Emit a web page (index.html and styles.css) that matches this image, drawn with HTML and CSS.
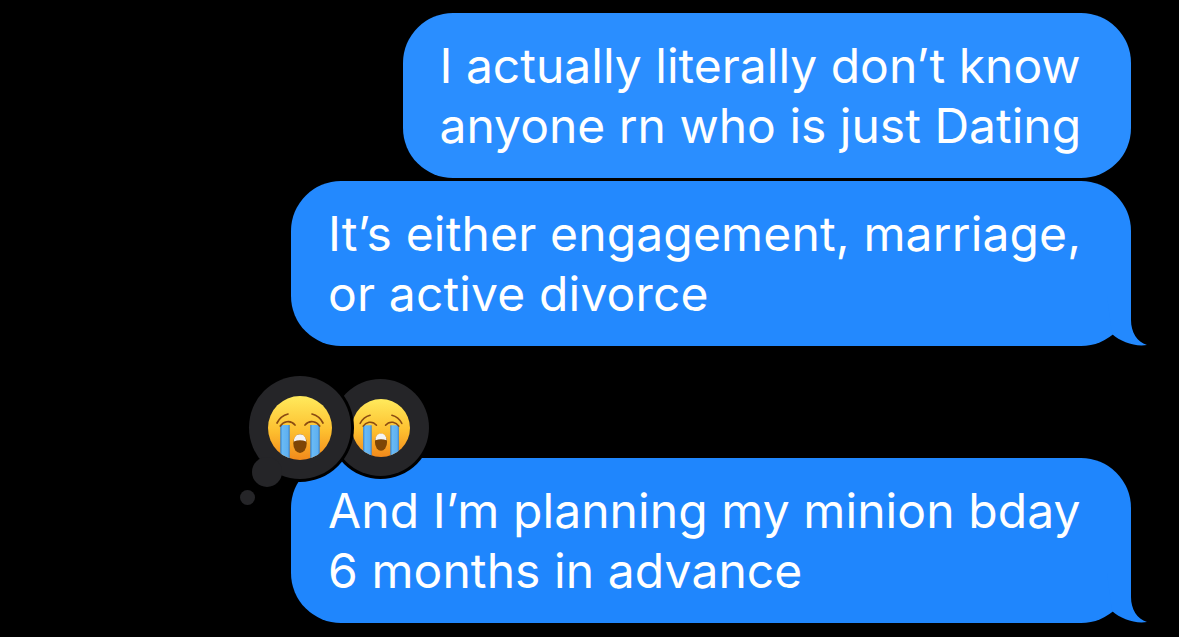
FILE: index.html
```html
<!DOCTYPE html>
<html lang="en">
<head>
<meta charset="utf-8">
<title>Messages</title>
<link rel="stylesheet" href="styles.css">
</head>
<body>
<svg class="defs" width="0" height="0" aria-hidden="true">
  <defs>
    <linearGradient id="face" x1="0" y1="0" x2="0" y2="1">
      <stop offset="0" stop-color="#ffea5c"/>
      <stop offset=".55" stop-color="#fdbf2f"/>
      <stop offset="1" stop-color="#f2891b"/>
    </linearGradient>
    <linearGradient id="tear" x1="0" y1="0" x2="1" y2="0">
      <stop offset="0" stop-color="#2a7fd6"/>
      <stop offset=".22" stop-color="#69baf5"/>
      <stop offset=".8" stop-color="#5fb0f0"/>
      <stop offset="1" stop-color="#2a7fd6"/>
    </linearGradient>
    <clipPath id="faceClip"><circle cx="32" cy="32" r="32"/></clipPath>
    <symbol id="cry" viewBox="0 0 64 64">
      <circle cx="32" cy="32" r="32" fill="url(#face)"/>
      <g clip-path="url(#faceClip)">
        <rect x="12.3" y="29" width="9.4" height="35" fill="url(#tear)"/>
        <rect x="42.3" y="29" width="9.4" height="35" fill="url(#tear)"/>
      </g>
      <g fill="none" stroke="#8a4b12" stroke-width="1.7" stroke-linecap="round">
        <path d="M9 27C12 21 16 19 20 18"/>
        <path d="M55 27C52 21 48 19 44 18"/>
        <path d="M12.3 30C15 26 22 23 27 29"/>
        <path d="M51.7 30C49 26 42 23 37 29"/>
      </g>
      <ellipse cx="32" cy="47.5" rx="6.7" ry="9.5" fill="#7d4506"/>
      <path d="M25.8 45.5C26 41 28.5 38.2 32 38.2S38 41 38.2 45.5C34 43.9 30 43.9 25.8 45.5Z" fill="#f4f4f4"/>
    </symbol>
  </defs>
</svg>
<main class="thread">
  <div class="bubble bubble-a">I actually literally don’t know<br>anyone rn who is just Dating</div>
  <div class="bubble bubble-b">It’s either engagement, marriage,<br>or active divorce
    <svg class="tail" viewBox="0 0 40 50" aria-hidden="true"><path d="M0 0H24V24C24 36 30 46 40 49C28 51 14 46 5 38Z" fill="#2389fe"/></svg>
  </div>
  <div class="bubble bubble-c">And I’m planning my minion bday<br>6 months in advance
    <svg class="tail" viewBox="0 0 40 50" aria-hidden="true"><path d="M0 0H24V24C24 36 30 46 40 49C28 51 14 46 5 38Z" fill="#1f86fd"/></svg>
    <div class="reaction reaction-back"><svg class="emoji emoji-small"><use href="#cry"/></svg></div>
    <div class="reaction reaction-front"><svg class="emoji emoji-large"><use href="#cry"/></svg></div>
    <div class="puff puff-large"></div>
    <div class="puff puff-small"></div>
  </div>
</main>
</body>
</html>
```
FILE: styles.css
```css
* { box-sizing: border-box; }
html, body { margin: 0; height: 100%; background: #000; overflow: hidden; }
.defs { position: absolute; }
.thread {
  display: flex;
  flex-direction: column;
  align-items: flex-end;
  gap: 3px;
  padding: 13px 48px 0 0;
  font-family: Inter, "Liberation Sans", sans-serif;
  color: #fff;
}
.bubble {
  position: relative;
  width: 840px;
  height: 165px;
  padding: 22.5px 0 22.5px 37px;
  border-radius: 50px;
  font-size: 48px;
  line-height: 60px;
  letter-spacing: .08px;
  white-space: nowrap;
}
.bubble-a { width: 728px; padding-left: 36.5px; letter-spacing: 0; background: #2a8eff; }
.bubble-b { letter-spacing: .15px; background: #2389fe; }
.bubble-c { background: #1f86fd; margin-top: 109px; }
.tail {
  position: absolute;
  right: -16px;
  bottom: 0;
  width: 40px;
  height: 50px;
}
.reaction {
  position: absolute;
  display: flex;
  align-items: center;
  justify-content: center;
  border-radius: 50%;
  background: #252528;
  box-shadow: 0 0 0 3px #000;
}
.reaction-back { left: 41px; top: -79px; width: 97px; height: 97px; }
.reaction-front { left: -42px; top: -82px; width: 102px; height: 103px; }
.puff { position: absolute; border-radius: 50%; background: #252528; }
.puff-large { left: -39px; top: -1px; width: 30px; height: 30px; }
.puff-small { left: -51px; top: 32px; width: 15px; height: 15px; }
.emoji-large { width: 64px; height: 64px; }
.emoji-small { width: 58px; height: 58px; }
```
